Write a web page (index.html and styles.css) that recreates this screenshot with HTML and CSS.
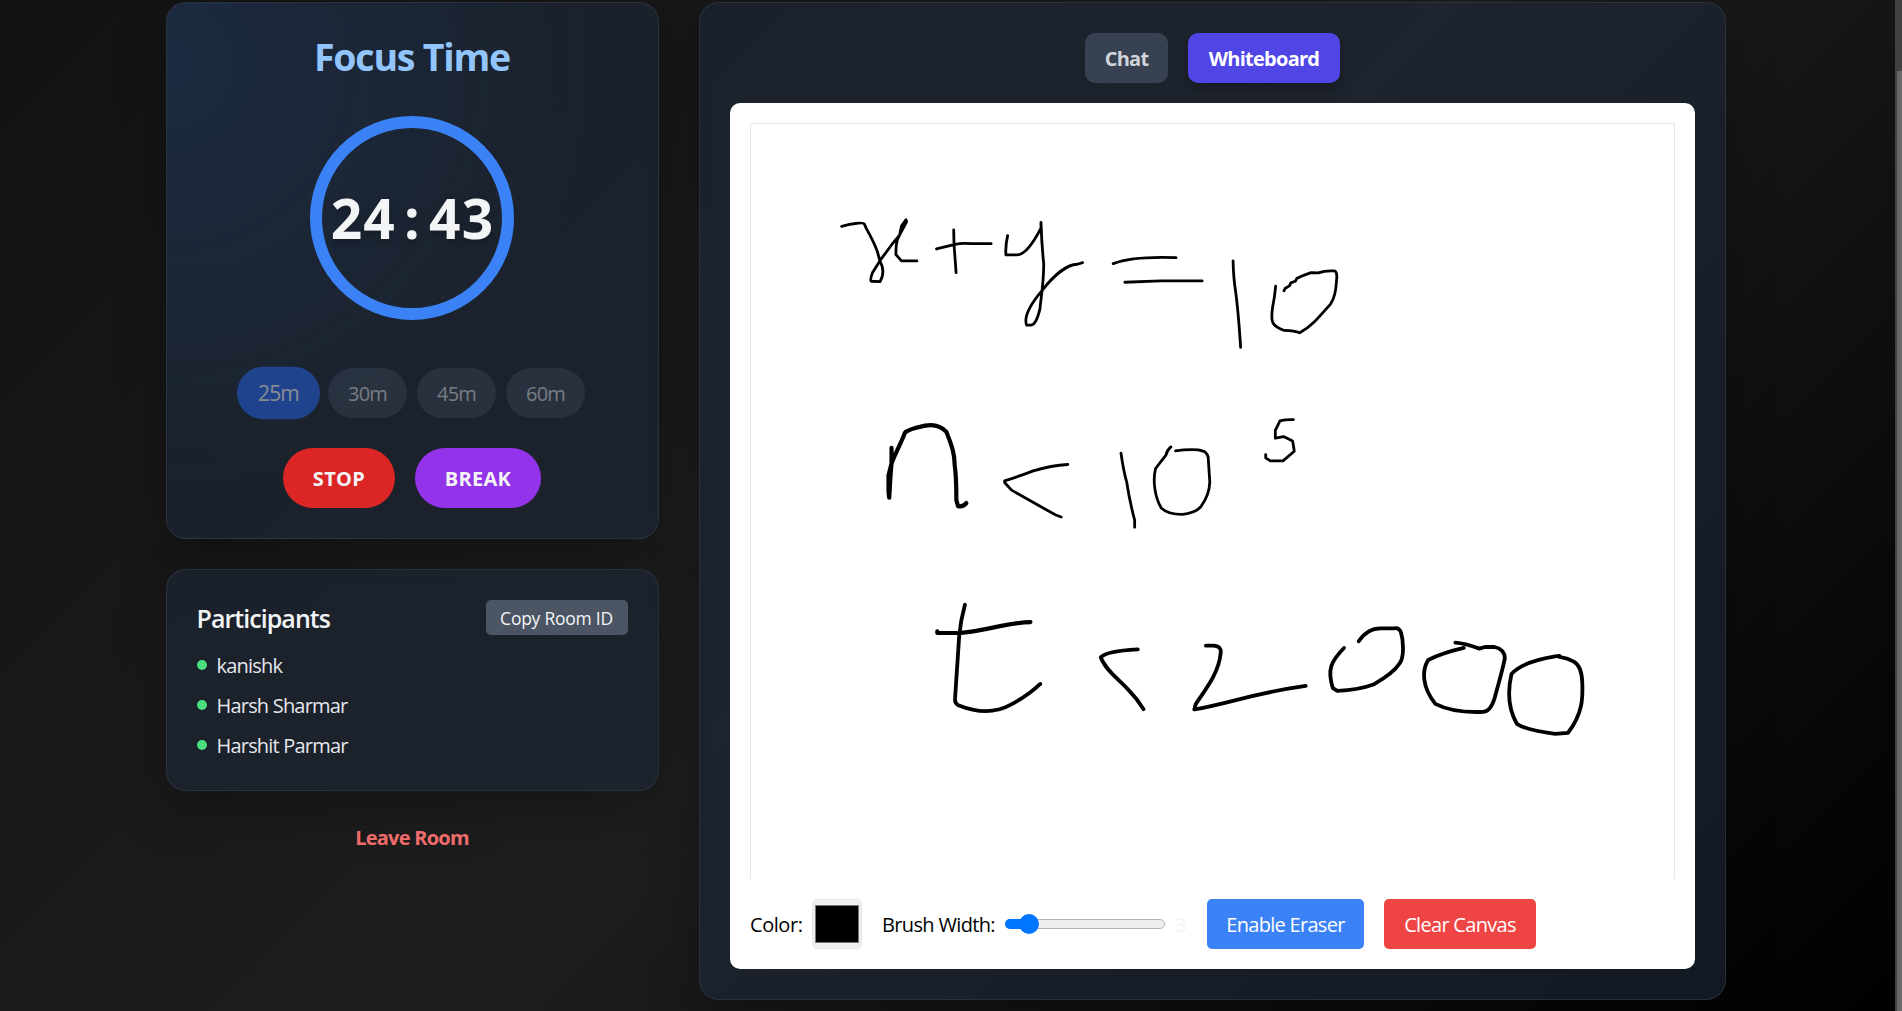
FILE: index.html
```html
<!DOCTYPE html>
<html lang="en">
<head>
<meta charset="utf-8">
<title>Study Room</title>
<link rel="stylesheet" href="styles.css">
</head>
<body>
<div class="page">
  <aside class="side">
    <section class="card timer">
      <h1 class="timer-title">Focus Time</h1>
      <div class="dial">
        <svg class="ring" viewBox="0 0 204 204"><circle cx="102" cy="102" r="96"/></svg>
        <div class="clock">24<span class="colon">:</span>43</div>
      </div>
      <div class="presets">
        <button class="pill active">25m</button>
        <button class="pill">30m</button>
        <button class="pill">45m</button>
        <button class="pill">60m</button>
      </div>
      <div class="actions">
        <button class="action stop">STOP</button>
        <button class="action break">BREAK</button>
      </div>
    </section>
    <section class="card people">
      <div class="people-head">
        <h2 class="people-title">Participants</h2>
        <button class="copy">Copy Room ID</button>
      </div>
      <ul class="list">
        <li><i class="dot"></i><span class="name">kanishk</span></li>
        <li><i class="dot"></i><span class="name">Harsh Sharmar</span></li>
        <li><i class="dot"></i><span class="name">Harshit Parmar</span></li>
      </ul>
    </section>
    <button class="leave">Leave Room</button>
  </aside>
  <main class="card board">
    <nav class="tabs">
      <button class="tab">Chat</button>
      <button class="tab on">Whiteboard</button>
    </nav>
    <div class="panel">
      <svg class="canvas" viewBox="750 123 925 756">
        <g class="ink thin" transform="translate(819.5 199.6) scale(.3444 .3333)">
          <path d="M62 77L85 71Q125 63 128 70L134 84C148 110 158 130 166 153L173 180C186 204 184 225 174 243L148 242Q144 236 152 216L175 178L207 133L230 104C238 88 247 72 251 62L249 57L236 76L231 102C220 122 220 140 220 162L236 181H281"/>
          <path d="M388 88L389 132L395 216M338 145L392 131Q412 126 440 129H497"/>
          <path d="M545 105Q538 135 540 163H572Q602 162 642 82V65Q644 130 650 190C650 250 641 300 639 325Q628 374 612 374H600C592 350 612 310 645 270C675 230 715 192 748 191L763 186"/>
          <path d="M852 189C900 170 960 168 1035 171M886 245L990 241H1111"/>
          <path d="M1201 181Q1202 230 1208 270Q1216 330 1223 441"/>
          <path d="M1325 257Q1322 290 1316 320C1310 365 1312 375 1350 390Q1380 391 1395 397C1430 378 1455 345 1485 310C1504 280 1500 250 1503 230Q1503 210 1494 211C1475 210 1462 212 1449 217L1428 216Q1405 224 1387 233L1382 242L1369 247L1365 256L1353 263L1349 271"/>
        </g>
        <g class="ink thin" transform="translate(859.5 399.6) scale(.3333)">
          <path class="bold" d="M94 143V190L91 225L87 293L85 275V225L94 190C107 155 125 124 134 98Q142 87 195 76Q236 69 259 95C277 140 283 160 284 195C289 230 289 260 289 300L294 318Q309 321 319 309"/>
          <path d="M624 193Q575 196 520 212Q476 229 434 242V247L455 270Q525 310 588 345L604 351"/>
          <path d="M784 159Q792 215 801 245Q809 300 825 360V382M934 140Q922 150 919 165L888 205C879 240 885 290 905 324Q926 344 970 343Q1010 337 1024 320Q1050 285 1051 245L1046 170Q1040 153 1028 152Q1015 146 972 149L948 152"/>
          <path d="M1302 58Q1280 57 1262 62L1248 90V114L1273 109L1300 122L1305 153L1271 182H1233L1219 173V163"/>
        </g>
        <g class="ink medium" transform="translate(909.5 589.8) scale(.4464 .3333)">
          <path d="M123 44C113 92 112 110 110 140L101 322Q99 340 108 346Q175 382 225 345Q265 317 292 282"/>
          <path class="wide" d="M61 124V129H106C155 128 220 96 270 96"/>
          <path d="M511 178Q440 183 428 202C438 240 470 270 490 300Q510 327 524 358"/>
          <path d="M664 167H680Q700 168 697 190C693 250 662 300 641 343L638 359C725 338 770 310 888 288"/>
          <path d="M974 174C944 215 936 240 949 295L959 303Q1008 300 1040 284Q1085 250 1099 220C1110 200 1107 150 1102 128Q1098 112 1086 115H1056Q1026 115 1007 154"/>
          <path d="M1224 158Q1245 160 1278 176L1290 171H1312Q1335 178 1335 205C1330 240 1317 300 1312 325Q1303 365 1286 366Q1220 370 1179 342C1148 290 1149 240 1163 210Q1197 188 1243 174"/>
          <path d="M1458 198L1448 199Q1375 215 1350 252C1340 310 1344 360 1362 402Q1383 421 1448 432L1477 429C1511 370 1510 320 1509 280Q1508 230 1491 216Q1477 205 1458 201"/>
        </g>
      </svg>
      <div class="tools">
        <label class="field"><span class="label color-label">Color:</span><span class="swatch"><span class="swatch-fill"></span></span></label>
        <label class="field brush"><span class="label brush-label">Brush Width:</span><span class="slider"><span class="slider-fill"></span><span class="thumb"></span></span><span class="value">3</span></label>
        <button class="tool erase">Enable Eraser</button>
        <button class="tool clear">Clear Canvas</button>
      </div>
    </div>
  </main>
</div>
<div class="scrollbar"><div class="scroll-thumb"></div></div>
</body>
</html>
```
FILE: styles.css
```css
* { box-sizing: border-box; margin: 0; padding: 0; }
body {
  width: 1902px; height: 1011px; overflow: hidden; display: flex;
  font: 20px/30px "Open Sans", "Noto Sans", sans-serif; color: #f3f4f6;
  background: linear-gradient(135deg, #121212 0%, #1e1e1e 50%, #000 100%);
}
button { font: inherit; color: inherit; border: 0; display: flex; align-items: center; justify-content: center; white-space: nowrap; padding-top: 2px; }
.page { width: 1895px; padding: 2px 169px 0 165.5px; display: grid; grid-template-columns: 493px 1027px; gap: 40.5px; align-items: start; }
.side { display: flex; flex-direction: column; }
.card { border: 1px solid rgba(55, 65, 81, .5); border-radius: 20px; padding: 30px; background-color: rgba(30, 40, 56, .6); box-shadow: 0 20px 50px rgba(0, 0, 0, .25); }
.timer { height: 537px; display: flex; flex-direction: column; align-items: center; background-image: radial-gradient(circle 430px at 0 60px, rgba(32, 62, 104, .38), rgba(32, 62, 104, 0)); }
.timer-title { font-size: 37.5px; line-height: 47px; font-weight: 700; letter-spacing: -1.23px; color: #93c5fd; }
.dial { width: 204px; height: 204px; margin: 36px 0 48px; display: grid; place-items: center; }
.dial > * { grid-area: 1 / 1; }
.ring { width: 204px; height: 204px; }
.ring circle { fill: none; stroke: #3b82f6; stroke-width: 12; }
.clock { font-size: 55px; line-height: 60px; font-weight: 700; letter-spacing: 1.2px; padding-left: 1px; text-shadow: 0 4px 8px rgba(0, 0, 0, .25); white-space: nowrap; }
.colon { display: inline-block; width: 33px; text-align: center; }
.presets { display: flex; gap: 10px; }
.pill { width: 79px; height: 50px; border-radius: 25px; background: #374151; color: #d1d5db; opacity: .5; letter-spacing: -.8px; }
.pill.active { background: #2563eb; color: #f3f4f6; transform: scale(1.05); }
.actions { display: flex; gap: 20px; margin-top: 30px; }
.action { height: 60px; border-radius: 30px; font-weight: 700; letter-spacing: .3px; }
.stop { width: 112px; background: #dc2626; }
.break { width: 126px; background: #9333ea; }
.people { height: 222px; margin-top: 30px; }
.people-head { display: flex; justify-content: space-between; align-items: center; height: 35px; }
.people-title { font-size: 25px; line-height: 33px; padding-top: 2px; font-weight: 600; letter-spacing: -.95px; }
.copy { width: 142px; height: 35px; border-radius: 5px; background: #4b5563; font-size: 17.5px; letter-spacing: -.25px; padding-top: 1px; }
.list { list-style: none; margin-top: 15px; display: flex; flex-direction: column; gap: 10px; color: #e5e7eb; letter-spacing: -.8px; }
.list li { display: flex; align-items: center; gap: 10px; height: 30px; }
.name { padding-top: 2px; }
.dot { width: 10px; height: 10px; border-radius: 50%; background: #4ade80; }
.leave { align-self: center; margin-top: 30px; background: none; font-weight: 700; color: #f06c6c; height: 32px; letter-spacing: -.75px; }
.board { height: 998px; }
.tabs { display: flex; justify-content: center; gap: 20px; }
.tab { width: 83px; height: 50px; border-radius: 10px; background: #374151; color: #d1d5db; font-weight: 700; letter-spacing: -.75px; }
.tab.on { width: 152px; background: #4f46e5; color: #fff; box-shadow: 0 6px 12px rgba(0, 0, 0, .25); }
.panel { margin-top: 20px; height: 866px; padding: 20px; border-radius: 10px; background: #fff; color: #000; }
.canvas { display: block; width: 925px; height: 756px; border: 1px solid #e5e7eb; border-bottom: 0; }
.ink path { fill: none; stroke: #000; stroke-linecap: round; stroke-linejoin: round; vector-effect: non-scaling-stroke; }
.thin path { stroke-width: 2.8; }
.thin .bold { stroke-width: 4.2; }
.medium path { stroke-width: 3.8; }
.medium .wide { stroke-width: 4.2; }
.tools { display: flex; align-items: center; gap: 20px; margin-top: 20px; height: 50px; }
.field { display: flex; align-items: center; gap: 10px; }
.label { padding-top: 2px; white-space: nowrap; }
.color-label { width: 52px; letter-spacing: -.45px; }
.brush-label { width: 113px; letter-spacing: -.65px; }
.swatch { width: 50px; height: 50px; padding: 5px 2px; border: 1px solid #e5e7eb; border-radius: 5px; background: #efefef; display: flex; }
.swatch-fill { flex: 1; background: #000; border: 1px solid #777; }
.brush { width: 305px; }
.slider { position: relative; width: 160px; height: 10px; border: 1px solid #b2b2b2; border-radius: 5px; background: #efefef; }
.slider-fill { position: absolute; left: -1px; top: -1px; width: 24px; height: 10px; border-radius: 5px; background: #0075ff; }
.thumb { position: absolute; left: 13px; top: -6px; width: 20px; height: 20px; border-radius: 50%; background: #0075ff; }
.value { padding-top: 2px; color: #f3f4f6; }
.tool { height: 50px; border-radius: 5px; color: #fff; letter-spacing: -.7px; }
.erase { width: 157px; background: #3b82f6; }
.clear { width: 152px; background: #ef4444; }
.scrollbar { width: 7px; height: 1011px; padding: 71px 0 0 2px; background: #424242; }
.scroll-thumb { height: 940px; background: #686868; }
```
